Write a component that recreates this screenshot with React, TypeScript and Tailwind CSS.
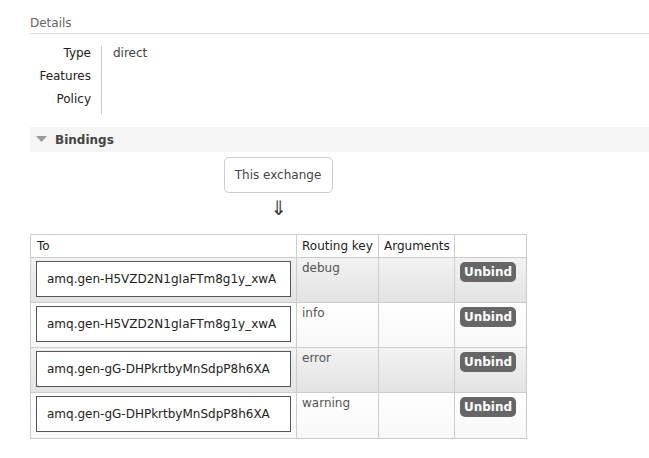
import React from 'react';

const bindings = [
  { queue: 'amq.gen-H5VZD2N1gIaFTm8g1y_xwA', key: 'debug' },
  { queue: 'amq.gen-H5VZD2N1gIaFTm8g1y_xwA', key: 'info' },
  { queue: 'amq.gen-gG-DHPkrtbyMnSdpP8h6XA', key: 'error' },
  { queue: 'amq.gen-gG-DHPkrtbyMnSdpP8h6XA', key: 'warning' },
];

const App = () => {
  const font = { fontFamily: '"DejaVu Sans", Verdana, sans-serif' };

  return (
    <div className="w-[649px] h-[458px] bg-white text-[12px] text-[#484848] overflow-hidden" style={font}>
      <div className="pl-[30px] pt-[16px]">
        <div className="text-[12px] text-[#666] border-b border-[#ddd] pb-[2px] leading-[15px]">Details</div>

        <div className="flex mt-[12px]">
          <div className="w-[71px] flex flex-col items-end gap-[8px] pr-[10px] text-[#222] leading-[15px]">
            <span>Type</span>
            <span>Features</span>
            <span>Policy</span>
          </div>
          <div className="border-l border-[#ccc] pl-[11px] h-[68px] leading-[15px] text-[#444]">direct</div>
        </div>

        <div className="mt-[13px] h-[25px] bg-[#f5f5f5] flex items-center pl-[6px]">
          <svg width="11" height="7" viewBox="0 0 11 7" className="mr-[8px]">
            <polygon points="0,0 11,0 5.5,6" fill="#999" />
          </svg>
          <span className="font-bold text-[#444]">Bindings</span>
        </div>

        <div className="w-[496px] flex flex-col items-center">
          <div className="mt-[5px] w-[109px] h-[36px] border border-[#ccc] rounded-[5px] flex items-center justify-center text-[#444]">
            This exchange
          </div>
          <div className="h-[30px] text-[20px] leading-[30px] text-[#333] ml-[2px]">⇓</div>
        </div>

        <div className="mt-[11px] w-[497px] border border-[#ccc]">
          <div className="flex h-[23px] border-b border-[#ccc] text-[#222] leading-[23px]">
            <div className="w-[266px] pl-[6px] border-r border-[#ccc]">To</div>
            <div className="w-[82px] pl-[5px] border-r border-[#ccc]">Routing key</div>
            <div className="w-[76px] pl-[5px] border-r border-[#ccc]">Arguments</div>
            <div className="flex-1" />
          </div>
          {bindings.map((b, i) => (
            <div
              key={i}
              className={
                'flex h-[45px] ' +
                (i < bindings.length - 1 ? 'border-b border-[#ccc] ' : '') +
                (i % 2 === 0
                  ? 'bg-gradient-to-b from-[#f2f2f2] to-[#e3e3e3]'
                  : 'bg-gradient-to-b from-[#ffffff] to-[#f8f8f8]')
              }
            >
              <div className="w-[266px] border-r border-[#ccc] pl-[5px] pt-[3px]">
                <div className="w-[255px] h-[36px] bg-white border border-[#555] flex items-center pl-[10px] text-[#222]">
                  {b.queue}
                </div>
              </div>
              <div className="w-[82px] border-r border-[#ccc] pl-[5px] pt-[3px] leading-[15px] text-[#555]">{b.key}</div>
              <div className="w-[76px] border-r border-[#ccc]" />
              <div className="flex-1 pl-[5px] pt-[4px]">
                <button className="w-[56px] h-[20px] rounded-[5px] bg-[#666] text-white font-bold text-[12px] leading-[20px]">
                  Unbind
                </button>
              </div>
            </div>
          ))}
        </div>
      </div>
    </div>
  );
};

export default App;
